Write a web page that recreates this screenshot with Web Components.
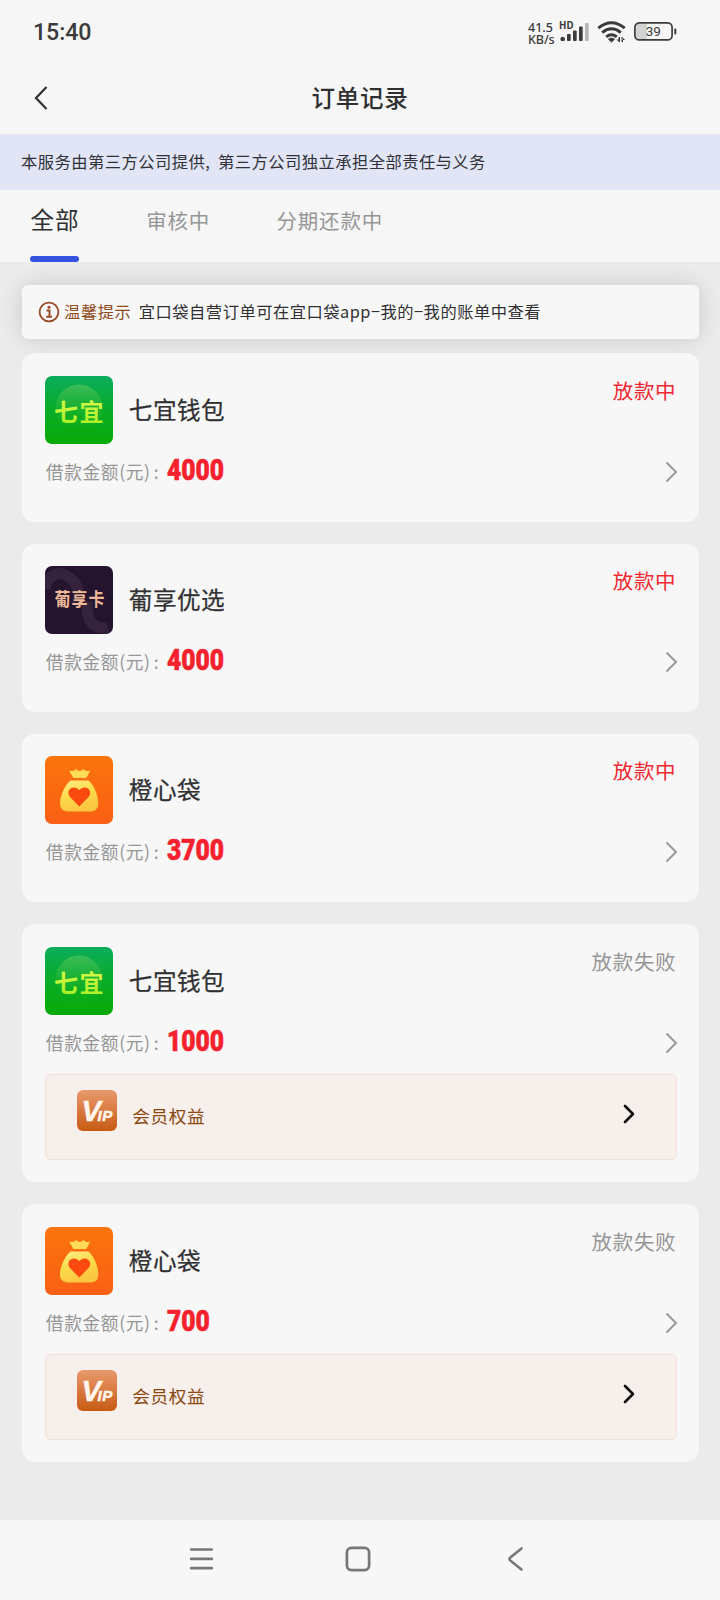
<!DOCTYPE html>
<html lang="zh-CN">
<head>
<meta charset="utf-8">
<title>订单记录</title>
<style>
html,body{margin:0;padding:0}
body{width:720px;height:1600px;overflow:hidden;background:#ebebeb;font-family:"Noto Sans CJK SC",sans-serif;color:#303033}
</style>
</head>
<body>
<order-page></order-page>
<script>
function define(name, html, setup){
  const t=document.createElement('template');
  t.innerHTML=html;
  customElements.define(name, class extends HTMLElement{
    constructor(){super();this.attachShadow({mode:'open'}).appendChild(t.content.cloneNode(true));}
    connectedCallback(){if(setup)setup(this,this.shadowRoot);}
  });
}

define('status-bar',`
<style>
:host{display:flex;height:64px;padding:0 43px 0 33px;align-items:center;justify-content:space-between;box-sizing:border-box;color:#3b3b3b}
.time{font:500 23.2px/64px Roboto,sans-serif;letter-spacing:-.1px}
.right{display:flex;align-items:center;height:64px}
.speed{font:500 12.5px/12.5px "Noto Sans",sans-serif;width:31px;padding-top:4px;white-space:nowrap}
.speed div:last-child{letter-spacing:-.1px}
svg{display:block}
</style>
<div class="time">15:40</div>
<div class="right">
 <div class="speed"><div>41.5</div><div>KB/s</div></div>
 <svg width="118" height="64" viewBox="559 0 118 64">
  <text x="559" y="29.300" font-family="Noto Sans,sans-serif" font-weight="700" font-size="10.500" fill="#3b3b3b" textLength="14.500" lengthAdjust="spacingAndGlyphs">HD</text>
  <g fill="#3b3b3b"><rect x="560.5" y="37" width="4.4" height="4" rx="1.5"/><rect x="567" y="34" width="3.7" height="7" rx="1"/><rect x="573" y="30.500" width="3.700" height="10.500" rx="1"/><rect x="579" y="26.500" width="3.700" height="14.500" rx="1"/></g>
  <rect x="585" y="23" width="3.700" height="18" rx="1" fill="#b5b5b5"/>
  <g fill="none" stroke="#3b3b3b" stroke-width="3"><path d="M598.300 28.200Q611.500 17.200 624.700 28.200"/><path d="M602.200 32.600Q611.500 25 620.800 32.600"/><path d="M606.200 36.900Q611.500 32.700 616.800 36.900"/></g>
  <path d="M608.500 39.200Q611.500 37 614.500 39.200L611.500 42Z" fill="#3b3b3b" stroke="#3b3b3b"/>
  <path d="M616.500 39.500h2.500v2.600zM618.500 37h1.500v5h-1.500zM621.500 37h1.500v5h-1.500zM622.500 37v3h2.500z" fill="#3b3b3b"/>
  <rect x="636" y="24" width="11" height="15.500" fill="#d2d2d2"/>
  <rect x="634.900" y="22.900" width="37.200" height="17" rx="4.500" fill="none" stroke="#3b3b3b" stroke-width="1.700"/>
  <rect x="674.300" y="28.500" width="2" height="6" rx="1" fill="#3b3b3b"/>
  <text x="645.700" y="36.300" font-family="Roboto,sans-serif" font-weight="400" font-size="13.500" fill="#3b3b3b">39</text>
 </svg>
</div>`);

define('page-header',`
<style>
:host{display:grid;grid-template-columns:60px 1fr 60px;height:70px;align-items:center;color:#303030}
svg{display:block;margin:-3px 0 0 33px}
h1{margin:-4px 0 0;text-align:center;font-weight:500;font-size:23.500px;line-height:40px;letter-spacing:.8px}
</style>
<svg width="18" height="26" viewBox="0 0 18 26"><path d="M13.500 2L3 13l10.500 11" fill="none" stroke="#303030" stroke-width="2.200"/></svg>
<h1><slot></slot></h1>`);

define('notice-banner',`
<style>
:host{display:block;height:56px;box-sizing:border-box;padding:0 21px;background:#e1e5f5;color:#303138;font-size:16.300px;line-height:54.500px;letter-spacing:.46px;white-space:nowrap}
</style><slot></slot>`);

define('tab-item',`
<style>
:host{display:flex;flex-direction:column;align-items:center;justify-content:space-between;height:72px;color:#969696;font-size:20.500px;letter-spacing:.8px;white-space:nowrap}
span{line-height:60px;margin-right:-.8px}
i{display:block;width:49px;height:6px;border-radius:3px}
:host([active]){color:#303033;font-size:23.600px}
:host([active]) span{line-height:59px}
:host([active]) i{background:#3652e0}
</style><span><slot></slot></span><i></i>`);

define('tab-bar',`
<style>:host{display:flex;gap:67.200px;height:72px;padding-left:30px;background:#f6f6f6}</style><slot></slot>`);

define('tip-bar',`
<style>
:host{display:flex;align-items:center;height:54.500px;box-sizing:border-box;padding-left:15.500px;border-radius:6px;background:#f7f7f7;box-shadow:0 0 22px rgba(0,0,0,.14);font-size:16.300px;letter-spacing:.5px;white-space:nowrap;line-height:30px}
svg{margin-right:4.300px;flex:none}
b{font-weight:400;color:#8f4b1c;margin:-1px 7.500px 0 0}
span{margin-top:-1px}
</style>
<svg width="22" height="22" viewBox="0 0 22 22"><circle cx="11" cy="11" r="9.400" fill="none" stroke="#954a25" stroke-width="1.800"/><path d="M8.500 9.500h3v6.200M8.200 15.700h5.800" fill="none" stroke="#954a25" stroke-width="1.900"/><circle cx="11" cy="6.300" r="1.500" fill="#954a25"/></svg>
<b><slot name="title"></slot></b><span><slot></slot></span>`);

const LOGOS={
qiyi:`<svg width="68" height="68" viewBox="0 0 68 68"><defs><linearGradient id="g" x2="0" y2="1"><stop stop-color="#0bad5c"/><stop offset=".5" stop-color="#09ac28"/><stop offset="1" stop-color="#08aa06"/></linearGradient><linearGradient id="c" x2="0" y2="1"><stop stop-color="#49c05a"/><stop offset="1" stop-color="#18b01c" stop-opacity="0"/></linearGradient><linearGradient id="t" x2="0" y2="1"><stop stop-color="#e2fa50"/><stop offset="1" stop-color="#a6ee22"/></linearGradient></defs><rect width="68" height="68" fill="url(#g)"/><circle cx="34" cy="32" r="23.500" fill="url(#c)" opacity=".8"/><g fill="url(#t)" font-family="Noto Sans CJK SC,sans-serif" font-weight="700"><text x="9" y="44.500" font-size="24">七</text><text x="34.500" y="44.500" font-size="24">宜</text></g></svg>`,
puxiang:`<svg width="68" height="68" viewBox="0 0 68 68"><rect width="68" height="68" fill="#24152f"/><g fill="none" stroke="#3a2840" stroke-width="11" opacity=".75"><path d="M0 23C2 8 14 5 22 10C34 17 36 29 31 39"/><path d="M43 35Q40 48 47 57Q53 64 63 61"/></g><g fill="#efb999" font-family="Noto Sans CJK SC,sans-serif" font-weight="700" font-size="16" transform="translate(0 -6) scale(1 1.150)"><text x="9.500" y="40">葡</text><text x="26.500" y="40">享</text><text x="43.500" y="40">卡</text></g></svg>`,
cheng:`<svg width="68" height="68" viewBox="0 0 68 68"><defs><linearGradient id="g" x2="0" y2="1"><stop stop-color="#fb750d"/><stop offset="1" stop-color="#fa5f14"/></linearGradient><linearGradient id="b" x2=".4" y2="1"><stop stop-color="#fff08e"/><stop offset=".5" stop-color="#fddc4c"/><stop offset="1" stop-color="#fbc640"/></linearGradient></defs><rect width="68" height="68" fill="url(#g)"/><path d="M24 14.500Q29 16 31 13Q34.500 17 38.500 13Q40.500 16 45 14.500Q43.500 19 41 22H28.500Q26 18 24 14.500Z" fill="#fedc58"/><path d="M25.500 24.500H43.500C49 29 53 39 53.300 47C53.500 53 50 55.500 44.500 55.500H24.500C18.500 55.500 14.800 53 15 47C15.300 39 20 29 25.500 24.500Z" fill="url(#b)"/><path d="M34.300 50.500L25 41C20 34.500 28 27.500 34.300 34C40.600 27.500 48.600 34.500 43.600 41Z" fill="#fb4a10"/></svg>`,
vip:`<svg width="40" height="41" viewBox="0 0 40 41"><defs><linearGradient id="g" x2="0" y2="1"><stop stop-color="#e79a6c"/><stop offset=".55" stop-color="#d8763d"/><stop offset="1" stop-color="#c65b12"/></linearGradient></defs><rect width="40" height="41" fill="url(#g)"/><text x="4.500" y="31" fill="#fff5ea" stroke="#fff5ea" stroke-width=".5" font-family="Liberation Sans,sans-serif" font-weight="700" font-style="italic" font-size="29">V<tspan dx="-4" font-size="15">IP</tspan></text></svg>`};
define('app-logo',`
<style>:host{display:block;width:68px;height:68px;border-radius:7px;overflow:hidden;flex:none}:host([kind=vip]){width:40px;height:41px;border-radius:6px}svg{display:block}</style><div id="art"></div>`,
(h,r)=>{r.getElementById('art').innerHTML=LOGOS[h.getAttribute('kind')];});

define('benefit-row',`
<style>
:host{display:flex;align-items:flex-start;box-sizing:border-box;width:632px;height:86.500px;padding:15.500px 40.500px 0 31px;background:#f7efeb;border:1.500px solid #f1dfd9;border-radius:6px;color:#8a480f;font-size:17.600px;letter-spacing:.65px}
span{margin:11px 0 0 15.500px;line-height:30px;flex:1}
svg{margin-top:14px}
</style>
<app-logo kind="vip"></app-logo><span><slot></slot></span>
<svg width="12" height="20" viewBox="0 0 12 20"><path d="M2 2l8 8-8 8" fill="none" stroke="#111" stroke-width="2.600" stroke-linecap="round" stroke-linejoin="round"/></svg>`);

define('order-card',`
<style>
:host{display:block;box-sizing:border-box;padding:22.500px 22px 18.800px 22.500px;border-radius:13px;background:#f7f7f7}
:host([benefit]){padding-bottom:22px}
.top{display:flex;height:68px}
h2{margin:0 0 0 16px;font-size:23.600px;font-weight:400;-webkit-text-stroke:.25px;line-height:67px;letter-spacing:.5px;flex:1}
.status{font-size:20.500px;line-height:28px;letter-spacing:.7px;margin-right:.7px;color:#969696}
:host([tone=active]) .status{color:#ef2932}
.row{display:flex;align-items:center;height:56px;margin-bottom:3px}
.label{color:#969696;font-size:17.700px;letter-spacing:.65px;line-height:30px;width:121px;padding-left:1px;margin-top:-2px;white-space:nowrap}
.label span{margin-left:3px}
.amount{flex:1;height:30px}
.amount span{display:inline-block;transform:scaleX(.835);transform-origin:0 50%;font:900 29.500px/26px Roboto,sans-serif;color:#f5222d;-webkit-text-stroke:.6px #f5222d}
svg{display:block;margin-right:-.5px}
</style>
<div class="top"><h2><slot name="name"></slot></h2><div class="status"><slot name="status"></slot></div></div>
<div class="row"><div class="label">借款金额(元)<span>:</span></div><div class="amount"><span><slot name="amount"></slot></span></div><svg width="13" height="22" viewBox="0 0 13 22"><path d="M1.500 1.500L11 11l-9.500 9.500" fill="none" stroke="#9a9a9a" stroke-width="2"/></svg></div>
<slot></slot>`,(h,r)=>{
  const logo=document.createElement('app-logo');
  logo.setAttribute('kind',h.getAttribute('logo'));
  r.querySelector('.top').prepend(logo);
});

define('system-nav',`
<style>:host{display:flex;align-items:center;justify-content:space-between;height:80px;box-sizing:border-box;padding:0 196px 3px 189px;background:#f7f7f7}svg{display:block}.home{margin-right:5px}</style>
<svg width="25" height="26" viewBox="0 0 25 26" stroke="#777" stroke-width="2.700" stroke-linecap="round"><path d="M2.200 3.500h20.600M2.200 12.900h20.600M2.200 22.200h20.600"/></svg>
<svg class="home" width="26" height="26" viewBox="0 0 26 26"><rect x="1.900" y="1.900" width="22.200" height="22.200" rx="4.500" fill="none" stroke="#777" stroke-width="2.700"/></svg>
<svg width="17" height="26" viewBox="0 0 17 26"><path d="M14.500 2.500L3.300 11.500Q1.600 13 3.300 14.500L14.500 23.500" fill="none" stroke="#777" stroke-width="2.600" stroke-linecap="round"/></svg>`);

define('order-page',`
<style>
:host{display:flex;flex-direction:column;width:720px;height:1600px}
.head{background:#f6f6f6}
main{flex:1;display:flex;flex-direction:column;padding:22.500px 21px 0 22.300px;min-height:0;background:#ebebeb}
.list{display:flex;flex-direction:column;gap:22px;margin-top:14.300px;position:relative}
.comma{letter-spacing:0;margin-right:8.300px}
</style>
<div class="head"><status-bar></status-bar><page-header>订单记录</page-header></div>
<notice-banner>本服务由第三方公司提供<span class="comma">,</span>第三方公司独立承担全部责任与义务</notice-banner>
<tab-bar><tab-item active>全部</tab-item><tab-item>审核中</tab-item><tab-item>分期还款中</tab-item></tab-bar>
<main>
<tip-bar><span slot="title">温馨提示</span>宜口袋自营订单可在宜口袋app−我的−我的账单中查看</tip-bar>
<div class="list">
<order-card logo="qiyi" tone="active"><span slot="name">七宜钱包</span><span slot="status">放款中</span><span slot="amount">4000</span></order-card>
<order-card logo="puxiang" tone="active"><span slot="name">葡享优选</span><span slot="status">放款中</span><span slot="amount">4000</span></order-card>
<order-card logo="cheng" tone="active"><span slot="name">橙心袋</span><span slot="status">放款中</span><span slot="amount">3700</span></order-card>
<order-card logo="qiyi" benefit><span slot="name">七宜钱包</span><span slot="status">放款失败</span><span slot="amount">1000</span><benefit-row>会员权益</benefit-row></order-card>
<order-card logo="cheng" benefit><span slot="name">橙心袋</span><span slot="status">放款失败</span><span slot="amount">700</span><benefit-row>会员权益</benefit-row></order-card>
</div>
</main>
<system-nav></system-nav>`);
</script>
</body>
</html>
